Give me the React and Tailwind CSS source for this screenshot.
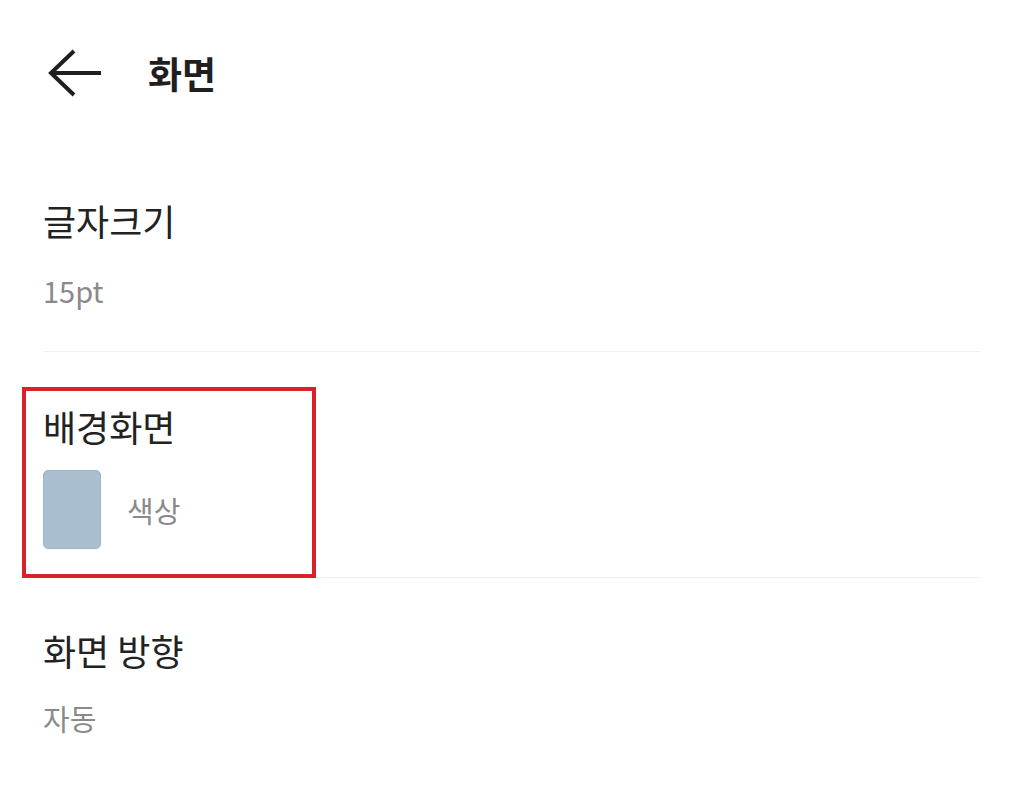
import React from "react";

const font = { fontFamily: '"Noto Sans CJK KR", "Noto Sans", sans-serif' };

const BackArrow = () => (
  <svg width="56" height="48" viewBox="0 0 56 48" fill="none" stroke="#1f1f1f" strokeWidth="4" strokeLinecap="butt" strokeLinejoin="miter">
    <path d="M3 24 H54" />
    <path d="M27 2 L4 24 L27 46" />
  </svg>
);

export default function App() {
  return (
    <div className="min-h-screen w-full bg-white" style={font}>
      <header className="flex h-[146px] items-center pl-[47px]">
        <BackArrow />
        <h1 className="ml-[45px] text-[37px] font-bold leading-[44px] text-[#1f1f1f]">화면</h1>
      </header>

      <div className="px-[43px]">
        <div className="border-b border-[#f1f1f1] pt-[52px] pb-[43px]">
          <div className="text-[36px] leading-[44px] text-[#222]">글자크기</div>
          <div className="mt-[30px] text-[29px] leading-[36px] text-[#8a8a8a]">15pt</div>
        </div>

        <div className="relative border-b border-[#f1f1f1] pt-[52px] pb-[28px]">
          <div className="text-[36px] leading-[44px] text-[#222]">배경화면</div>
          <div className="mt-[22px] flex items-center">
            <div className="h-[79px] w-[58px] rounded-[5px] border border-[#9fb5c7] bg-[#a9bfd0]" />
            <span className="ml-[26px] text-[29px] leading-[36px] text-[#8a8a8a]">색상</span>
          </div>
          <div className="pointer-events-none absolute left-[-21px] top-[35px] h-[191px] w-[294px] border-4 border-[#dc202b]" />
        </div>

        <div className="pt-[50px]">
          <div className="text-[36px] leading-[44px] text-[#222]">화면 방향</div>
          <div className="mt-[28px] text-[29px] leading-[36px] text-[#8a8a8a]">자동</div>
        </div>
      </div>
    </div>
  );
}
